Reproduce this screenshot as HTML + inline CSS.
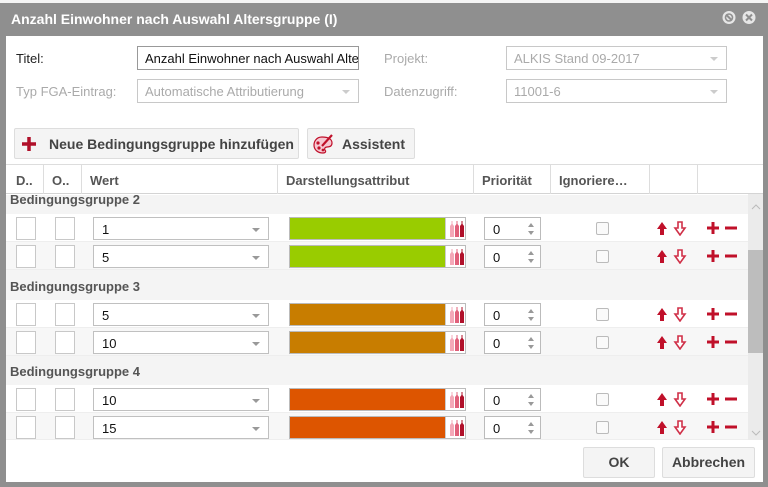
<!DOCTYPE html><html><head><meta charset="utf-8"><style>
*{box-sizing:border-box;margin:0;padding:0}
body{width:768px;height:487px;overflow:hidden;background:#8f8f8f;font-family:"Liberation Sans",Arial,sans-serif;font-size:13px;position:relative}
.a{position:absolute}
.lbl{color:#222}.dis{color:#aaa}
.inp{position:absolute;border:1px solid #c8c8c8;background:#fff;height:24px;padding:4px 7px;color:#aaa;white-space:nowrap;overflow:hidden}
.car{position:absolute;right:8px;top:10px;width:0;height:0;border-left:4px solid transparent;border-right:4px solid transparent;border-top:4px solid #ccc}
.btn{position:absolute;border:1px solid #ddd;background:#f4f4f4;border-radius:2px;font-weight:bold;color:#444;font-size:14px}
.hd{position:absolute;top:165px;height:29px;border-right:1px solid #ddd;color:#555;font-weight:bold;padding:8px 0 0 8px;white-space:nowrap}
.grp{position:absolute;left:6px;width:742px;background:#f4f4f4;color:#555;font-weight:bold;padding-left:4px}
.row{position:absolute;left:6px;width:742px;height:28px;border-bottom:1px solid #eee}
.sq{position:absolute;top:3px;width:20px;height:23px;border:1px solid #c8c8c8;background:#fff}
.cmb{position:absolute;left:87px;top:3px;width:176px;height:23px;border:1px solid #c0c0c0;background:#fff;padding:4px 8px;color:#111}
.col{position:absolute;left:283px;top:3px;width:177px;height:23px;border:1px solid #bbb}
.pal{position:absolute;right:0;top:0;width:20px;height:21px;background:#fff;border-left:1px solid #ccc}
.pal svg{position:absolute;left:2px;top:1px}
.sp{position:absolute;left:478px;top:3px;width:57px;height:23px;border:1px solid #bbb;background:#fff;padding:4px 8px;color:#111}
.sp svg{position:absolute;right:6px;top:5px}
.cb{position:absolute;left:590px;top:8px;width:13px;height:13px;border:1px solid #bbb;border-radius:2px;background:#fafafa}
.ic{position:absolute;left:648px;top:7px}
</style></head><body>
<div class="a" style="left:0;top:0;width:768px;height:3px;background:#f4f4f4"></div>
<div class="a" style="left:6px;top:36px;width:757px;height:446px;background:#fff"></div>
<div class="a" style="left:11px;top:11px;color:#fff;font-weight:bold;font-size:14px">Anzahl Einwohner nach Auswahl Altersgruppe (I)</div>
<svg class="a" style="left:722px;top:10px" width="40" height="16"><circle cx="7" cy="7.5" r="6.5" fill="#e6e6e6"/><line x1="4" y1="4.5" x2="10" y2="10.5" stroke="#8f8f8f" stroke-width="2"/><circle cx="7" cy="7.5" r="3.5" fill="none" stroke="#8f8f8f" stroke-width="1.6"/><circle cx="27" cy="7.5" r="6.5" fill="#e6e6e6"/><path d="M24 4.5l6 6M30 4.5l-6 6" stroke="#8f8f8f" stroke-width="2"/></svg>
<div class="a lbl" style="left:16px;top:51px">Titel:</div>
<div class="inp" style="left:137px;top:46px;width:222px;color:#111;border-color:#999">Anzahl Einwohner nach Auswahl Alte</div>
<div class="a dis" style="left:16px;top:84px">Typ FGA-Eintrag:</div>
<div class="inp" style="left:137px;top:79px;width:222px">Automatische Attributierung<div class="car"></div></div>
<div class="a dis" style="left:384px;top:51px">Projekt:</div>
<div class="inp" style="left:506px;top:46px;width:221px">ALKIS Stand 09-2017<div class="car"></div></div>
<div class="a dis" style="left:384px;top:84px">Datenzugriff:</div>
<div class="inp" style="left:506px;top:79px;width:221px">11001-6<div class="car"></div></div>
<div class="btn" style="left:14px;top:128px;width:285px;height:31px"><svg class="a" style="left:6px;top:7px" width="16" height="16"><path d="M8 1v14M1 8h14" stroke="#b0102a" stroke-width="3.5"/></svg><span class="a" style="left:34px;top:7px">Neue Bedingungsgruppe hinzufügen</span></div>
<div class="btn" style="left:307px;top:128px;width:108px;height:31px"><svg class="a" style="left:4px;top:4px" width="22" height="22"><path d="M10 4C4 4 2 9 2 12c0 5 4 8 9 8 3 0 3-2 2-3s0-3 2-3c3 0 5-1 5-4 0-4-4-6-10-6z" fill="#f6c8d2" stroke="#c0102a" stroke-width="1.2"/><circle cx="6" cy="10" r="1.6" fill="#c0102a"/><circle cx="7" cy="15" r="1.6" fill="#c0102a"/><circle cx="11" cy="17" r="1.4" fill="#c0102a"/><line x1="10" y1="13" x2="20" y2="2" stroke="#c0102a" stroke-width="2.2"/></svg><span class="a" style="left:34px;top:7px">Assistent</span></div>
<div class="a" style="left:6px;top:164px;width:757px;height:1px;background:#ddd"></div>
<div class="a" style="left:6px;top:165px;width:757px;height:29px;background:#fff;border-bottom:1px solid #d4d4d4"></div>
<div class="hd" style="left:8px;width:36px">D..</div>
<div class="hd" style="left:44px;width:38px">O..</div>
<div class="hd" style="left:82px;width:196px">Wert</div>
<div class="hd" style="left:278px;width:196px">Darstellungsattribut</div>
<div class="hd" style="left:474px;width:77px">Priorität</div>
<div class="hd" style="left:551px;width:99px">Ignoriere…</div>
<div class="hd" style="left:650px;width:48px"></div>
<div class="a" style="left:6px;top:195px;width:742px;height:245px;overflow:hidden">
<div class="grp" style="left:0;top:0;height:19px;line-height:10px">Bedingungsgruppe 2</div>
</div>
<div class="grp" style="top:270px;height:30px;padding-top:9px">Bedingungsgruppe 3</div>
<div class="grp" style="top:356px;height:29px;padding-top:8px">Bedingungsgruppe 4</div>
<svg width="0" height="0" style="position:absolute"><defs>
<g id="pl"><path d="M2 18V7l1.5-2V2h1v3L6 7v11z" fill="#f4a8b8"/><path d="M7 18V7l1.5-2V2h1v3L11 7v11z" fill="#e0607a"/><path d="M12 18V7l1.5-2V2h1v3L16 7v11z" fill="#b0102a"/></g>
<g id="sp"><path d="M0 4l3-4 3 4z M0 8l3 4 3-4z" fill="#999"/></g>
<g id="ic"><path d="M10 14V8h3L8 1 3 8h3v6z" fill="#c0102a"/><path d="M28 1v6h3l-5 7-5-7h3V1z" fill="#fff" stroke="#d03048" stroke-width="1.6"/><path d="M59 1v12M53 7h12" stroke="#c0102a" stroke-width="3"/><path d="M71 7h12" stroke="#c0102a" stroke-width="3"/></g>
</defs></svg>
<div class="row" style="top:214px;background:#fff"><div class="sq" style="left:10px"></div><div class="sq" style="left:49px"></div><div class="cmb">1<div class="car" style="border-top-color:#999"></div></div><div class="col" style="background:#99cc00"><div class="pal"><svg width="18" height="19"><use href="#pl"/></svg></div></div><div class="sp">0<svg width="6" height="12"><use href="#sp"/></svg></div><div class="cb"></div><svg class="ic" width="92" height="15"><use href="#ic"/></svg></div>
<div class="row" style="top:242px;background:#f7f7f7"><div class="sq" style="left:10px"></div><div class="sq" style="left:49px"></div><div class="cmb">5<div class="car" style="border-top-color:#999"></div></div><div class="col" style="background:#99cc00"><div class="pal"><svg width="18" height="19"><use href="#pl"/></svg></div></div><div class="sp">0<svg width="6" height="12"><use href="#sp"/></svg></div><div class="cb"></div><svg class="ic" width="92" height="15"><use href="#ic"/></svg></div>
<div class="row" style="top:300px;background:#fff"><div class="sq" style="left:10px"></div><div class="sq" style="left:49px"></div><div class="cmb">5<div class="car" style="border-top-color:#999"></div></div><div class="col" style="background:#c87d00"><div class="pal"><svg width="18" height="19"><use href="#pl"/></svg></div></div><div class="sp">0<svg width="6" height="12"><use href="#sp"/></svg></div><div class="cb"></div><svg class="ic" width="92" height="15"><use href="#ic"/></svg></div>
<div class="row" style="top:328px;background:#f7f7f7"><div class="sq" style="left:10px"></div><div class="sq" style="left:49px"></div><div class="cmb">10<div class="car" style="border-top-color:#999"></div></div><div class="col" style="background:#c87d00"><div class="pal"><svg width="18" height="19"><use href="#pl"/></svg></div></div><div class="sp">0<svg width="6" height="12"><use href="#sp"/></svg></div><div class="cb"></div><svg class="ic" width="92" height="15"><use href="#ic"/></svg></div>
<div class="row" style="top:385px;background:#fff"><div class="sq" style="left:10px"></div><div class="sq" style="left:49px"></div><div class="cmb">10<div class="car" style="border-top-color:#999"></div></div><div class="col" style="background:#dd5500"><div class="pal"><svg width="18" height="19"><use href="#pl"/></svg></div></div><div class="sp">0<svg width="6" height="12"><use href="#sp"/></svg></div><div class="cb"></div><svg class="ic" width="92" height="15"><use href="#ic"/></svg></div>
<div class="row" style="top:413px;background:#f7f7f7;height:27px"><div class="sq" style="left:10px"></div><div class="sq" style="left:49px"></div><div class="cmb">15<div class="car" style="border-top-color:#999"></div></div><div class="col" style="background:#dd5500"><div class="pal"><svg width="18" height="19"><use href="#pl"/></svg></div></div><div class="sp">0<svg width="6" height="12"><use href="#sp"/></svg></div><div class="cb"></div><svg class="ic" width="92" height="15"><use href="#ic"/></svg></div>
<div class="a" style="left:748px;top:194px;width:15px;height:246px;background:#ebebeb"></div>
<div class="a" style="left:748px;top:250px;width:15px;height:103px;background:#bdbdbd"></div>
<svg class="a" style="left:751px;top:204px" width="10" height="6"><path d="M1 5l4-4 4 4" fill="none" stroke="#bbb"/></svg>
<svg class="a" style="left:751px;top:430px" width="10" height="6"><path d="M1 1l4 4 4-4" fill="none" stroke="#bbb"/></svg>
<div class="btn" style="left:583px;top:447px;width:72px;height:31px;text-align:center;line-height:29px">OK</div>
<div class="btn" style="left:662px;top:447px;width:93px;height:31px;text-align:center;line-height:29px">Abbrechen</div>
</body></html>
